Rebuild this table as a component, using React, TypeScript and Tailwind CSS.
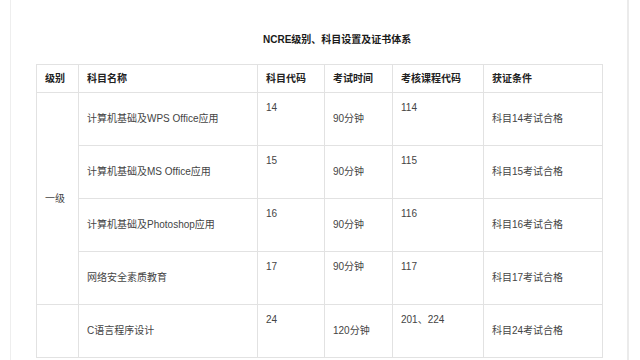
const rows = [
  { name: "计算机基础及WPS Office应用", code: "14", time: "90分钟", course: "114", cond: "科目14考试合格", timeTop: false },
  { name: "计算机基础及MS Office应用", code: "15", time: "90分钟", course: "115", cond: "科目15考试合格", timeTop: false },
  { name: "计算机基础及Photoshop应用", code: "16", time: "90分钟", course: "116", cond: "科目16考试合格", timeTop: false },
  { name: "网络安全素质教育", code: "17", time: "90分钟", course: "117", cond: "科目17考试合格", timeTop: true },
];

const cell = "border border-[#e2e2e2] px-[8px] text-[10px] leading-[14px] text-[#444]";
const head = "border border-[#e2e2e2] px-[8px] text-[10px] leading-[14px] font-bold text-[#222] text-left align-middle";

export default function App() {
  return (
    <div className="w-[640px] h-[360px] overflow-hidden bg-white font-['Liberation_Sans','Noto_Sans_CJK_SC',sans-serif]">
      <div className="ml-[10px] w-[619px] h-[360px] border-l border-r-2 border-l-[#eeeeee] border-r-[#ebebeb]">
        {/* Title */}
        <div className="pt-[33px] pl-[252px] text-[10px] leading-[14px] font-bold text-[#1a1a1a]">
          NCRE级别、科目设置及证书体系
        </div>

        {/* Table */}
        <table className="mt-[17px] ml-[25px] w-[566px] table-fixed border-collapse">
          <colgroup>
            <col className="w-[42px]" />
            <col className="w-[179px]" />
            <col className="w-[67px]" />
            <col className="w-[68px]" />
            <col className="w-[91px]" />
            <col className="w-[119px]" />
          </colgroup>
          <thead>
            <tr className="h-[28px]">
              <th className={head}>级别</th>
              <th className={head}>科目名称</th>
              <th className={head}>科目代码</th>
              <th className={head}>考试时间</th>
              <th className={head}>考核课程代码</th>
              <th className={head}>获证条件</th>
            </tr>
          </thead>
          <tbody>
            {rows.map((r, i) => (
              <tr key={r.code} className="h-[53px]">
                {i === 0 && (
                  <td rowSpan={4} className={`${cell} align-middle`}>一级</td>
                )}
                <td className={`${cell} align-middle`}>{r.name}</td>
                <td className={`${cell} align-top pt-[8px]`}>{r.code}</td>
                <td className={`${cell} ${r.timeTop ? "align-top pt-[8px]" : "align-middle"}`}>{r.time}</td>
                <td className={`${cell} align-top pt-[8px]`}>{r.course}</td>
                <td className={`${cell} align-middle`}>{r.cond}</td>
              </tr>
            ))}
            <tr className="h-[53px]">
              <td className={`${cell} align-middle`}></td>
              <td className={`${cell} align-middle`}>C语言程序设计</td>
              <td className={`${cell} align-top pt-[8px]`}>24</td>
              <td className={`${cell} align-middle`}>120分钟</td>
              <td className={`${cell} align-top pt-[8px]`}>201、224</td>
              <td className={`${cell} align-middle`}>科目24考试合格</td>
            </tr>
          </tbody>
        </table>
      </div>
    </div>
  );
}
